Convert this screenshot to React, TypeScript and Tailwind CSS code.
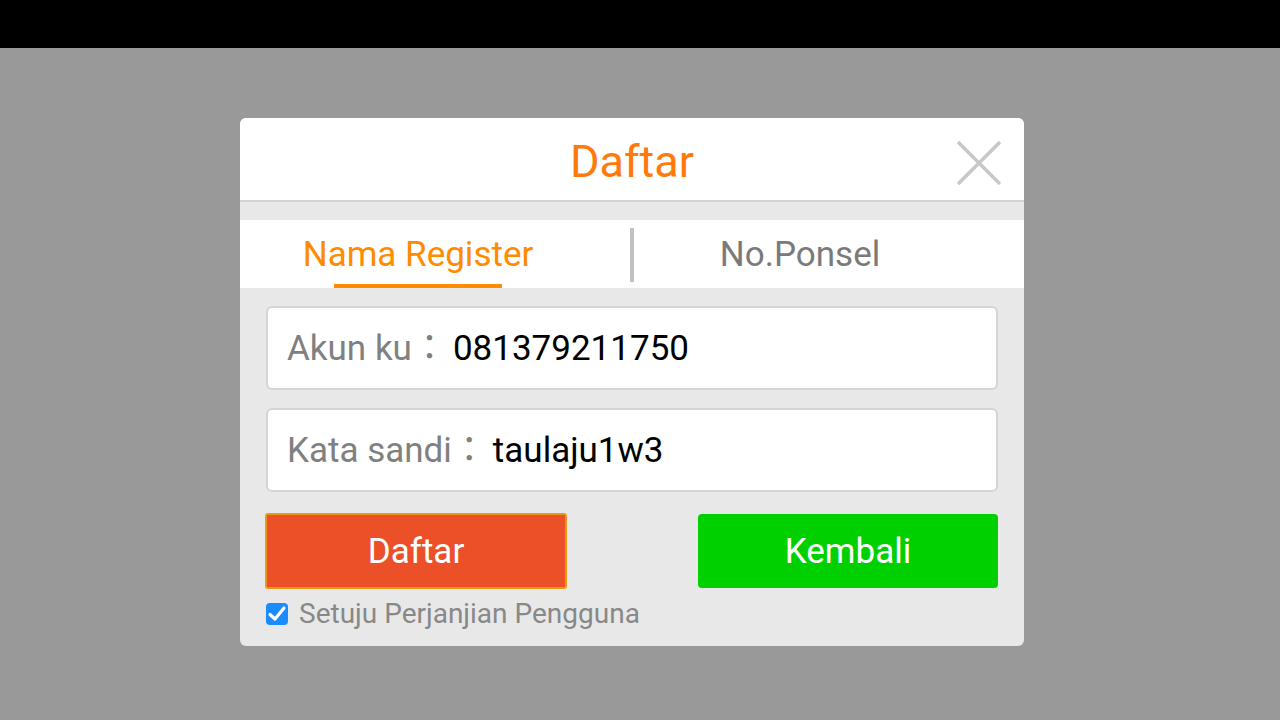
import React from "react";

export default function App() {
  const font = { fontFamily: 'Roboto, "Noto Sans CJK JP", sans-serif' };
  return (
    <div className="w-[1280px] h-[720px] flex flex-col bg-[#999999]" style={font}>
      <div className="h-[48px] bg-black shrink-0" />
      <div className="flex-1 pl-[240px] pt-[70px]">
        <div className="w-[784px] h-[528px] rounded-[6px] overflow-hidden bg-[#e8e8e8] flex flex-col">
          {/* header */}
          <div className="relative h-[84px] bg-white border-b-[2px] border-[#d2d2d2] flex items-center justify-center shrink-0">
            <span className="text-[45px] leading-none text-[#ff7a0a] pt-[4px]">Daftar</span>
            <svg className="absolute left-[717px] top-[23px]" width="44" height="44" viewBox="0 0 44 44">
              <path d="M1 1 L43 43 M43 1 L1 43" stroke="#c8c8c8" strokeWidth="3.5" />
            </svg>
          </div>
          <div className="h-[18px] shrink-0" />
          {/* tabs */}
          <div className="h-[68px] bg-white flex shrink-0">
            <div className="w-[390px] pr-[34px] flex flex-col items-center justify-end">
              <span className="text-[35px] leading-none text-[#ff8c00] mb-[12px]">Nama Register</span>
              <div className="w-[168px] h-[4px] bg-[#ff8c00]" />
            </div>
            <div className="w-[4px] h-[54px] mt-[8px] bg-[#c2c2c2]" />
            <div className="flex-1 pr-[58px] flex items-center justify-center">
              <span className="text-[35px] leading-none text-[#7a7a7a]">No.Ponsel</span>
            </div>
          </div>
          {/* body */}
          <div className="px-[26px] pt-[18px] flex flex-col">
            <div className="h-[84px] bg-white border-[2px] border-[#d4d4d4] rounded-[6px] flex items-center pl-[19px]">
              <span className="text-[35px] leading-none text-[#808080]">Akun ku：</span>
              <span className="text-[35px] leading-none text-black ml-[6px]">081379211750</span>
            </div>
            <div className="h-[84px] mt-[18px] bg-white border-[2px] border-[#d4d4d4] rounded-[6px] flex items-center pl-[19px]">
              <span className="text-[35px] leading-none text-[#808080]">Kata sandi：</span>
              <span className="text-[35px] leading-none text-black ml-[6px]">taulaju1w3</span>
            </div>
            <div className="mt-[21px] flex justify-between items-start">
              <button className="w-[302px] h-[76px] ml-[-1px] bg-[#ec5029] border-[2px] border-[#e99a12] rounded-[3px] text-white text-[35px] leading-none flex items-center justify-center">
                Daftar
              </button>
              <button className="w-[300px] h-[74px] mt-[1px] bg-[#00d000] rounded-[4px] text-white text-[35px] leading-none flex items-center justify-center">
                Kembali
              </button>
            </div>
            <div className="mt-[11px] flex items-center">
              <div className="w-[22px] h-[22px] rounded-[4px] bg-[#1a8cff] flex items-center justify-center">
                <svg width="20" height="20" viewBox="0 0 20 20">
                  <path d="M3 10.5 L8 15 L17 4" stroke="white" strokeWidth="3.2" fill="none" strokeLinecap="round" strokeLinejoin="round" />
                </svg>
              </div>
              <span className="ml-[11px] text-[28px] leading-none text-[#888888]">Setuju Perjanjian Pengguna</span>
            </div>
          </div>
        </div>
      </div>
    </div>
  );
}
